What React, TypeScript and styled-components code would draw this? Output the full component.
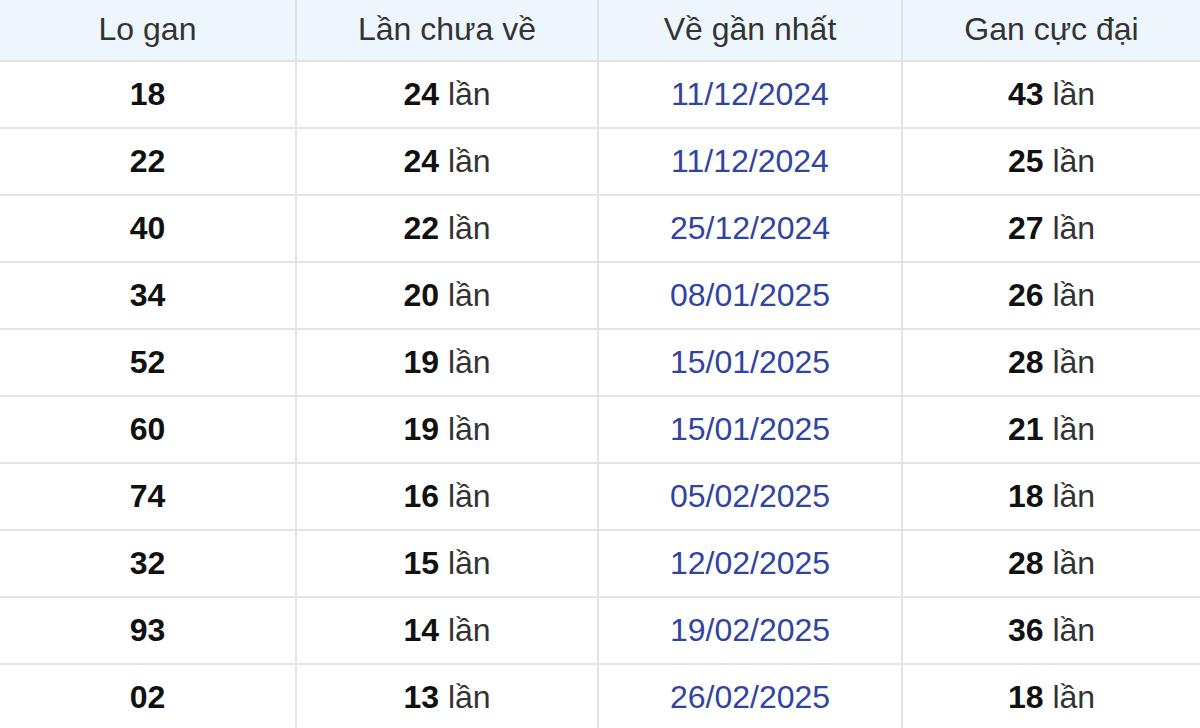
import React from 'react';
import styled, { createGlobalStyle } from 'styled-components';

const GlobalStyle = createGlobalStyle`
  html, body {
    margin: 0;
    padding: 0;
    background: #ffffff;
    overflow: hidden;
  }
  body {
    font-family: 'Liberation Sans', Arial, sans-serif;
  }
`;

const Table = styled.table`
  border-collapse: collapse;
  table-layout: fixed;
  width: 1200px;
  font-size: 32px;
  line-height: 1.1;
  color: #222;
`;

const HeadCell = styled.th<{ $last?: boolean }>`
  height: 60px;
  padding: 0;
  background: #eef6fd;
  font-weight: normal;
  color: #333;
  text-align: center;
  vertical-align: middle;
  border-bottom: 2px solid #e0e3e6;
  border-right: ${(p) => (p.$last ? 'none' : '2px solid #e0e3e6')};
`;

const Cell = styled.td<{ $last?: boolean }>`
  height: 64px;
  padding: 1px 0 0;
  text-align: center;
  vertical-align: middle;
  border-bottom: 2px solid #e4e4e4;
  border-right: ${(p) => (p.$last ? 'none' : '2px solid #e4e4e4')};
`;

const Num = styled.b`
  font-weight: bold;
  color: #111;
`;

const Unit = styled.span`
  color: #333;
`;

const DateText = styled.span`
  color: #2f44a3;
`;

const rows = [
  { lo: '18', chua: 24, date: '11/12/2024', max: 43 },
  { lo: '22', chua: 24, date: '11/12/2024', max: 25 },
  { lo: '40', chua: 22, date: '25/12/2024', max: 27 },
  { lo: '34', chua: 20, date: '08/01/2025', max: 26 },
  { lo: '52', chua: 19, date: '15/01/2025', max: 28 },
  { lo: '60', chua: 19, date: '15/01/2025', max: 21 },
  { lo: '74', chua: 16, date: '05/02/2025', max: 18 },
  { lo: '32', chua: 15, date: '12/02/2025', max: 28 },
  { lo: '93', chua: 14, date: '19/02/2025', max: 36 },
  { lo: '02', chua: 13, date: '26/02/2025', max: 18 },
];

function Count({ n }: { n: number }) {
  return (
    <>
      <Num>{n}</Num> <Unit>lần</Unit>
    </>
  );
}

function App() {
  return (
    <>
      <GlobalStyle />
      <Table>
        <colgroup>
          <col style={{ width: 296 }} />
          <col style={{ width: 302 }} />
          <col style={{ width: 304 }} />
          <col style={{ width: 298 }} />
        </colgroup>
        <thead>
          <tr>
            <HeadCell>Lo gan</HeadCell>
            <HeadCell>Lần chưa về</HeadCell>
            <HeadCell>Về gần nhất</HeadCell>
            <HeadCell $last>Gan cực đại</HeadCell>
          </tr>
        </thead>
        <tbody>
          {rows.map((r, i) => (
            <tr key={i}>
              <Cell>
                <Num>{r.lo}</Num>
              </Cell>
              <Cell>
                <Count n={r.chua} />
              </Cell>
              <Cell>
                <DateText>{r.date}</DateText>
              </Cell>
              <Cell $last>
                <Count n={r.max} />
              </Cell>
            </tr>
          ))}
        </tbody>
      </Table>
    </>
  );
}

export default App;
